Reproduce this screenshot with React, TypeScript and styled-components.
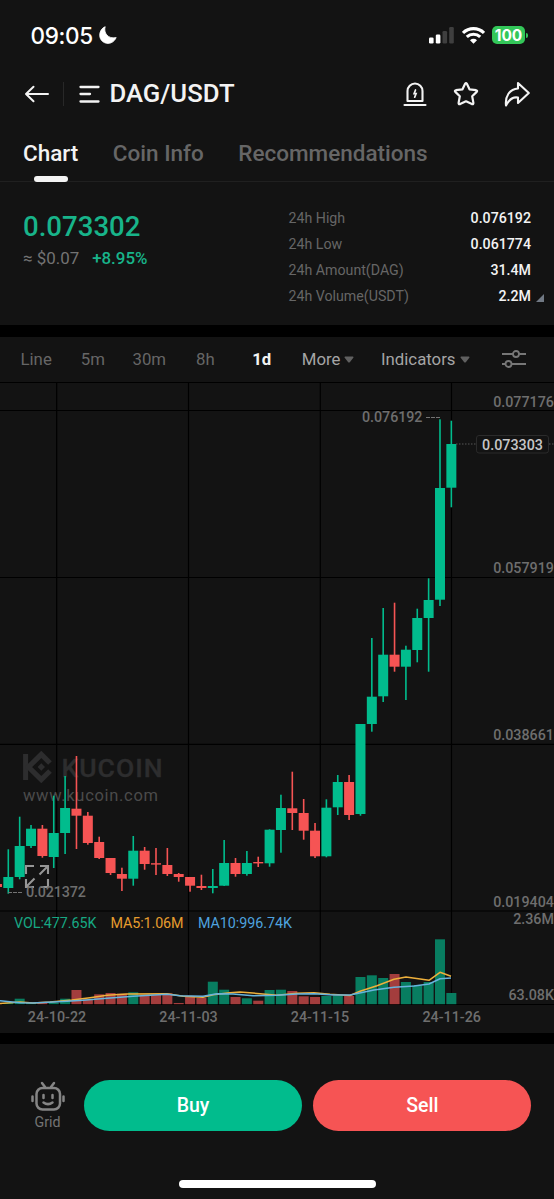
import styled, { createGlobalStyle } from 'styled-components'

type Candle = [dir: 'up' | 'down', top: number, bottom: number, high: number, low: number, volTop: number]

const GREEN = '#01bc8d'
const RED = '#f65454'
const GRAY = '#737373'

const GlobalStyle = createGlobalStyle`
  * {
    box-sizing: border-box;
  }

  body {
    margin: 0;
    background: #000;
    font-family: Roboto, "Liberation Sans", sans-serif;
  }

  button {
    font-family: inherit;
    border: none;
    padding: 0;
    background: none;
    color: inherit;
  }

  svg {
    display: block;
    flex: none;
  }
`

const Screen = styled.div`
  width: 554px;
  height: 1199px;
  display: flex;
  flex-direction: column;
  overflow: hidden;
  background: #000;
  color: #f3f3f3;
`

const Panel = styled.section<{ $height: number; $gap?: number }>`
  height: ${props => props.$height}px;
  margin-bottom: ${props => props.$gap || 0}px;
  flex: none;
  background: #131313;
`

const StatusBar = styled.div`
  height: 70px;
  padding: 0 26px 0 30.5px;
  display: flex;
  align-items: center;
  justify-content: space-between;
`

const Clock = styled.div`
  display: flex;
  align-items: center;
  gap: 6px;
  font: 500 22.5px/27px Inter, sans-serif;
  letter-spacing: -.35px;
  color: #fff;
`

const StatusIcons = styled.div`
  display: flex;
  align-items: center;
  gap: 7.5px;
`

const Battery = styled.div`
  display: flex;
  align-items: center;
  gap: 1px;

  span {
    width: 33px;
    height: 18px;
    border-radius: 5px;
    background: #34c759;
    color: #fff;
    font: 700 15.5px/19px Inter, sans-serif;
    text-align: center;
  }

  i {
    width: 2px;
    height: 5px;
    border-radius: 0 2px 2px 0;
    background: #34c759;
  }
`

const TitleBar = styled.header`
  height: 47px;
  padding: 0 24px 0 23px;
  display: flex;
  align-items: center;
`

const Divider = styled.span`
  width: 1px;
  height: 24px;
  margin: 0 14px;
  background: #282828;
`

const Pair = styled.h1`
  margin: 0 auto 0 9.5px;
  font-size: 25.7px;
  font-weight: 500;
  line-height: 47px;
`

const Actions = styled.div`
  display: flex;
  align-items: center;
  gap: 25.5px;
`

const Tabs = styled.nav`
  height: 65px;
  padding: 0 23px;
  display: flex;
  gap: 34.5px;
  border-bottom: 1px solid #202020;
`

const Tab = styled.button<{ $active?: boolean }>`
  height: 65px;
  padding-top: 7px;
  display: flex;
  flex-direction: column;
  align-items: center;
  font-size: 22.5px;
  font-weight: 500;
  line-height: 58px;
  white-space: nowrap;
  color: ${props => props.$active ? '#f3f3f3' : '#666'};

  &::after {
    content: '';
    width: 34px;
    height: 6px;
    flex: none;
    margin-top: -6px;
    border-radius: 3px;
    background: ${props => props.$active ? '#f3f3f3' : 'transparent'};
  }
`

const Summary = styled.div`
  padding: 24px 23px 0;
  display: flex;
  justify-content: space-between;
`

const Price = styled.div`
  color: #18b48a;
  font-size: 27.6px;
  font-weight: 500;
  line-height: 41px;
`

const Change = styled.div`
  display: flex;
  gap: 13px;
  font-size: 16.9px;
  line-height: 22px;
  color: ${GRAY};

  b {
    font-weight: 500;
    color: #18b48a;
  }
`

const Stats = styled.dl`
  width: 242.5px;
  margin: .4px 0 0;
`

const Stat = styled.div`
  position: relative;
  display: flex;
  justify-content: space-between;
  font-size: 14.2px;
  line-height: 25.7px;

  dt {
    color: #666;
  }

  dd {
    margin: 0;
    font-weight: 500;
  }
`

const Corner = styled.i`
  position: absolute;
  right: -13px;
  bottom: 7px;
  border-left: 8px solid transparent;
  border-bottom: 8px solid #717984;
`

const Toolbar = styled.div`
  height: 45px;
  padding: 0 28px 1px 20.5px;
  display: flex;
  align-items: center;
`

const Period = styled.button<{ $gap: number; $tone?: string; $bold?: boolean }>`
  margin-right: ${props => props.$gap}px;
  display: flex;
  align-items: center;
  gap: 4px;
  font-size: 16.8px;
  font-weight: ${props => props.$bold ? 700 : 400};
  white-space: nowrap;
  color: ${props => props.$tone || '#666'};
`

const Footer = styled.footer`
  padding: 36px 23px 0 30.5px;
  display: flex;
`

const GridButton = styled.button`
  width: 34px;
  margin-right: 19.5px;
  display: flex;
  flex-direction: column;
  align-items: center;
  font-size: 14.2px;
  line-height: 18px;
  color: ${GRAY};
`

const TradeButton = styled.button<{ $color: string }>`
  width: 218px;
  height: 51px;
  margin-right: 11.3px;
  flex: none;
  border-radius: 26px;
  background: ${props => props.$color};
  color: #fff;
  font-size: 19.5px;
  font-weight: 500;
`

const HomeBar = styled.div`
  width: 197px;
  height: 8px;
  margin: 49px auto 0 179px;
  border-radius: 4px;
  background: #fff;
`

// top/bottom of the body, wick ends and top of the volume bar
const candles: Candle[] = [
  ['down', 884, 887, 884, 887, 1003.5],
  ['up', 877, 888, 849.3, 893.7, 1003],
  ['up', 846, 877, 816.7, 879.3, 998.7],
  ['up', 828.7, 846, 825, 848, 1003],
  ['down', 828.7, 856, 825, 857.7, 1003],
  ['up', 833, 857, 795.7, 868, 1002.5],
  ['up', 808, 833, 776, 854, 998.7],
  ['down', 808.7, 815.7, 756, 849, 990],
  ['down', 815.7, 843, 812, 844.7, 999.3],
  ['down', 842, 858, 836.7, 859, 994.3],
  ['down', 858, 873, 858, 875, 993],
  ['down', 874, 878.7, 867.7, 891, 993.7],
  ['up', 850.7, 878.7, 836, 885.7, 992.3],
  ['down', 850.7, 864, 847, 869.7, 994.7],
  ['down', 863.2, 864.6, 848, 875, 995],
  ['down', 865, 874, 848, 876, 993.3],
  ['down', 874, 877, 873, 881.7, 1003],
  ['down', 877, 885.7, 877, 891.7, 997],
  ['down', 886, 888, 874.7, 890, 998],
  ['up', 886, 888, 869, 893.3, 981.7],
  ['up', 863, 885.7, 840, 886, 989.7],
  ['down', 863, 874, 858, 876.7, 997],
  ['up', 863, 874, 851, 875.7, 998.3],
  ['down', 862, 863.4, 856.7, 867, 1000.7],
  ['up', 829.7, 863.3, 829.3, 866.7, 990],
  ['up', 808, 830, 794.7, 852.7, 989.7],
  ['down', 808.3, 813, 771.7, 830, 991],
  ['down', 813, 830.7, 799, 839.7, 996.3],
  ['down', 830.7, 856.3, 823, 858, 997],
  ['up', 807.7, 856.3, 799.3, 857.3, 996],
  ['up', 782, 807.3, 775, 815, 995.7],
  ['down', 782, 815, 775, 820, 996],
  ['up', 724, 814, 724, 815.7, 977],
  ['up', 696.7, 724, 638, 731.7, 975.3],
  ['up', 654.7, 696.3, 608, 702, 978],
  ['down', 654.7, 666.7, 602.7, 671.7, 974],
  ['up', 649.7, 666.7, 645.7, 700, 982],
  ['up', 618, 650, 608.7, 662.3, 985.3],
  ['up', 600, 618, 578.3, 671.7, 982],
  ['up', 488, 599.7, 419.3, 606, 939.3],
  ['up', 444, 487.7, 420.7, 507.3, 993],
]

const candleX = (i: number) => -3.05 + i * 11.36

const ma5 = '0,1003.5 20,1002 33,1003 50,1002 72,1000 90,997.7 107,995.3 127,994 167,993.7 183,996.3 203,997.3 213,994.7 230,992.7 240,992 260,993.7 277,995.3 297,993.3 314,992.7 330,994.3 350,995.5 360,991.3 377,985.7 394,979.3 406,977 429,980.3 440,972.3 451,976.3'
const ma10 = '0,1000.7 20,1002.7 33,1003 67,1001.3 83,1000.3 107,998.3 133,996.3 167,994.3 180,995.7 203,996.3 217,993.7 233,994 253,995.7 277,995.3 297,994 314,993.7 334,995 350,995 374,990 394,987.3 414,986 429,984 440,978.7 451,978'

const priceLabels: [number, string][] = [
  [406.5, '0.077176'],
  [573.3, '0.057919'],
  [740.3, '0.038661'],
  [907.3, '0.019404'],
  [924, '2.36M'],
  [1000.3, '63.08K'],
]

const dateLabels: [number, string][] = [
  [57, '24-10-22'],
  [188.5, '24-11-03'],
  [320, '24-11-15'],
  [451.7, '24-11-26'],
]

const PriceChart = () => (
  <svg width="554" height="651" viewBox="0 382 554 651" fontFamily="Roboto, sans-serif" fontSize="14.3">
    <g stroke="#000" strokeWidth="1.2">
      {[382.5, 410.5, 577.5, 744.3, 911].map(y => <path key={y} d={`M0 ${y}H554`} />)}
      {[56.7, 188.5, 320.3, 451.5].map(x => <path key={x} d={`M${x} 382V1004`} />)}
      <path d="M0 1004.5H554" />
    </g>

    <g stroke="#2d2d2e" fill="none">
      <path d="M25.6 754V780" strokeWidth="5" />
      <path d="M50 763L41.3 754.5L28.5 767L41.3 779.5L50 771" strokeWidth="5.2" />
      <path d="M37.6 767l3.7-3.7 3.7 3.7-3.7 3.7z" fill="#2d2d2e" stroke="none" />
    </g>
    <text x="61.5" y="777" fontSize="26.5" fontWeight="500" fill="#2d2d2e" stroke="#2d2d2e" strokeWidth=".4" textLength="101">KUCOIN</text>
    <text x="23" y="801" fontSize="16.5" fill="#4b4b4b" textLength="135">www.kucoin.com</text>

    {candles.map(([dir, top, bottom, high, low, volTop], i) => (
      <g key={i} fill={dir === 'up' ? GREEN : RED}>
        <rect x={candleX(i) - .8} y={high} width="1.6" height={low - high} />
        <rect x={candleX(i) - 5} y={top} width="10" height={bottom - top} />
        <rect x={candleX(i) - 5} y={volTop} width="10" height={1004.2 - volTop} fill={dir === 'up' ? '#087d60' : '#a33d3d'} />
      </g>
    ))}

    <g fill="none" strokeWidth="1.5" strokeLinejoin="round">
      <polyline points={ma5} stroke="#eeb03c" />
      <polyline points={ma10} stroke="#67b3dd" />
    </g>

    <path d="M26 874v-8h8M40 866h8v8M48 866L39.5 874.5M48 879v8h-7M34 887h-8v-8M26 887L34.5 878.5" fill="none" stroke="#969696" strokeWidth="2.1" />

    <g stroke={GRAY} fill="none">
      <path d="M8 892.5H22M426 417.5H440" strokeDasharray="4 1" />
      <path d="M456 444H554" stroke="#565656" strokeDasharray="1.5 1.5" />
    </g>
    <rect x="476.5" y="435.5" width="72" height="17.5" rx="2.5" fill="#131313" stroke="#2b2b2b" />
    <text x="482" y="450" fontWeight="500" fill="#c6c6c6" textLength="61">0.073303</text>

    <g fill="#6e6e6e" fontWeight="500">
      <text x="362" y="422" textLength="60.5">0.076192</text>
      <text x="26" y="897" textLength="60">0.021372</text>
      {priceLabels.map(([y, label]) => <text key={label} x="554" y={y} textAnchor="end">{label}</text>)}
      {dateLabels.map(([x, label]) => <text key={label} x={x} y="1022.4" textAnchor="middle">{label}</text>)}
    </g>
    <text x="14" y="928.4" fill="#17a883" textLength="82.5">VOL:477.65K</text>
    <text x="110.5" y="928.4" fill="#e69d2e" textLength="73">MA5:1.06M</text>
    <text x="198" y="928.4" fill="#4ea2df" textLength="94">MA10:996.74K</text>
  </svg>
)

const Caret = () => (
  <svg width="10" height="7" viewBox="0 0 10 7">
    <path d="M1.2.5h7.6c.7 0 .9.8.5 1.3L6 6c-.6.7-1.4.7-2 0L.7 1.8C.3 1.3.5.5 1.2.5z" fill="#606060" />
  </svg>
)

const stats = [
  ['24h High', '0.076192'],
  ['24h Low', '0.061774'],
  ['24h Amount(DAG)', '31.4M'],
  ['24h Volume(USDT)', '2.2M'],
]

const App = () => {
  return (
    <Screen>
      <GlobalStyle />
      <Panel $height={325} $gap={12}>
        <StatusBar>
          <Clock>
            09:05
            <svg width="18" height="18" viewBox="0 0 18 18">
              <path d="M6.2.7C4.3 6.5 8.8 13.3 17.2 11.600 15.500 15.400 12.500 17.400 9 17.400 4.300 17.400.7 13.700.7 9.200.7 5.400 2.900 1.900 6.200.7z" fill="#fff" stroke="#fff" strokeWidth=".8" strokeLinejoin="round" />
            </svg>
          </Clock>
          <StatusIcons>
            <svg width="25" height="17" viewBox="0 0 25 17">
              <rect x="0" y="10.5" width="4.6" height="6" rx="1.3" fill="#fff" />
              <rect x="6.8" y="7.5" width="4.6" height="9" rx="1.3" fill="#fff" />
              <rect x="13.5" y="4" width="4.6" height="12.5" rx="1.3" fill="#3f3f3f" />
              <rect x="20.2" y="0" width="4.6" height="16.5" rx="1.3" fill="#3f3f3f" />
            </svg>
            <svg width="23" height="17" viewBox="0 0 23 17">
              <g fill="none" stroke="#fff" strokeWidth="3.1">
                <path d="M1 5.9C6.8.2 16.2.2 22 5.9" />
                <path d="M4.8 9.9C8.6 6.3 14.4 6.3 18.2 9.9" />
              </g>
              <path d="M8 13.2C10 11.4 13 11.4 15 13.2L11.5 16.7z" fill="#fff" />
            </svg>
            <Battery><span>100</span><i /></Battery>
          </StatusIcons>
        </StatusBar>

        <TitleBar>
          <svg width="26" height="20" viewBox="0 0 26 20" fill="none" stroke="#f3f3f3" strokeWidth="2" strokeLinecap="round" strokeLinejoin="round">
            <path d="M25 10H3M10.5 2.8L3 10l7.5 7.2" />
          </svg>
          <Divider />
          <svg width="22" height="20" viewBox="0 0 22 20" fill="none" stroke="#f3f3f3" strokeWidth="2.3" strokeLinecap="round">
            <path d="M2.5 3H20.5M2.5 10H12M2.5 17.5H20.5" />
          </svg>
          <Pair>DAG/USDT</Pair>
          <Actions>
            <svg width="24" height="26" viewBox="0 0 24 26" fill="none" stroke="#f3f3f3" strokeWidth="2.1" strokeLinecap="round">
              <path d="M4.5 20V10a7.5 7.5 0 0 1 15 0V20zM1.5 24h21" strokeLinejoin="round" />
              <path d="M12.5 9l-1.4 3.6h2l-1.4 3.6" strokeWidth="1.7" />
            </svg>
            <svg width="26" height="26" viewBox="0 0 26 26" fill="none" stroke="#f3f3f3" strokeWidth="2.2" strokeLinejoin="round">
              <path d="M12.1 2.8q.9-1.5 1.8 0l2.6 5.5 6.6.9q1.7.4.6 1.7l-4.5 4.4 1.2 6.6q.1 1.8-1.5 1.2L13 20.300l-5.900 2.800q-1.600.6-1.500-1.200l1.200-6.600-4.500-4.400q-1.100-1.300.6-1.700l6.600-.9z" />
            </svg>
            <svg width="26" height="26" viewBox="0 0 26 26" fill="none" stroke="#f3f3f3" strokeWidth="2.1" strokeLinejoin="round">
              <path d="M14 2L24.8 12 14 22V16.5C8.5 15.5 5 18.5 2 24.5 1 15 5.5 8.3 14 7.5z" />
            </svg>
          </Actions>
        </TitleBar>

        <Tabs>
          <Tab $active>Chart</Tab>
          <Tab>Coin Info</Tab>
          <Tab>Recommendations</Tab>
        </Tabs>

        <Summary>
          <div>
            <Price>0.073302</Price>
            <Change>≈ $0.07 <b>+8.95%</b></Change>
          </div>
          <Stats>
            {stats.map(([label, value], i) => (
              <Stat key={label}>
                <dt>{label}</dt>
                <dd>{value}</dd>
                {i === 3 && <Corner />}
              </Stat>
            ))}
          </Stats>
        </Summary>
      </Panel>

      <Panel $height={696} $gap={11}>
        <Toolbar>
          <Period $gap={29}>Line</Period>
          <Period $gap={27.5}>5m</Period>
          <Period $gap={30}>30m</Period>
          <Period $gap={37.5}>8h</Period>
          <Period $gap={30.5} $tone="#f3f3f3" $bold>1d</Period>
          <Period $gap={26.5} $tone="#a5a5a5">More<Caret /></Period>
          <Period $gap={32} $tone="#a5a5a5">Indicators<Caret /></Period>
          <svg width="24" height="20" viewBox="0 0 24 20" fill="none" stroke="#777" strokeWidth="1.8">
            <path d="M0 5H11M17 5H24M0 15H3.5M9.5 15H24" />
            <circle cx="14" cy="5" r="3" />
            <circle cx="6.5" cy="15" r="3" />
          </svg>
        </Toolbar>
        <PriceChart />
      </Panel>

      <Panel $height={155}>
        <Footer>
          <GridButton>
            <svg width="34" height="33" viewBox="0 0 34 33" fill="none" stroke="#858585" strokeWidth="2.5" strokeLinecap="round">
              <rect x="5.5" y="8" width="23.5" height="21.5" rx="6" />
              <path d="M11 3l3 4M23 3l-3 4M1.5 16.5v4.5M32.5 16.5v4.5M12.5 15v3M21.5 15v3M12.5 22.5q4.5 3.3 9 0" />
            </svg>
            <span>Grid</span>
          </GridButton>
          <TradeButton $color={GREEN}>Buy</TradeButton>
          <TradeButton $color={RED}>Sell</TradeButton>
        </Footer>
        <HomeBar />
      </Panel>
    </Screen>
  )
}

export default App
